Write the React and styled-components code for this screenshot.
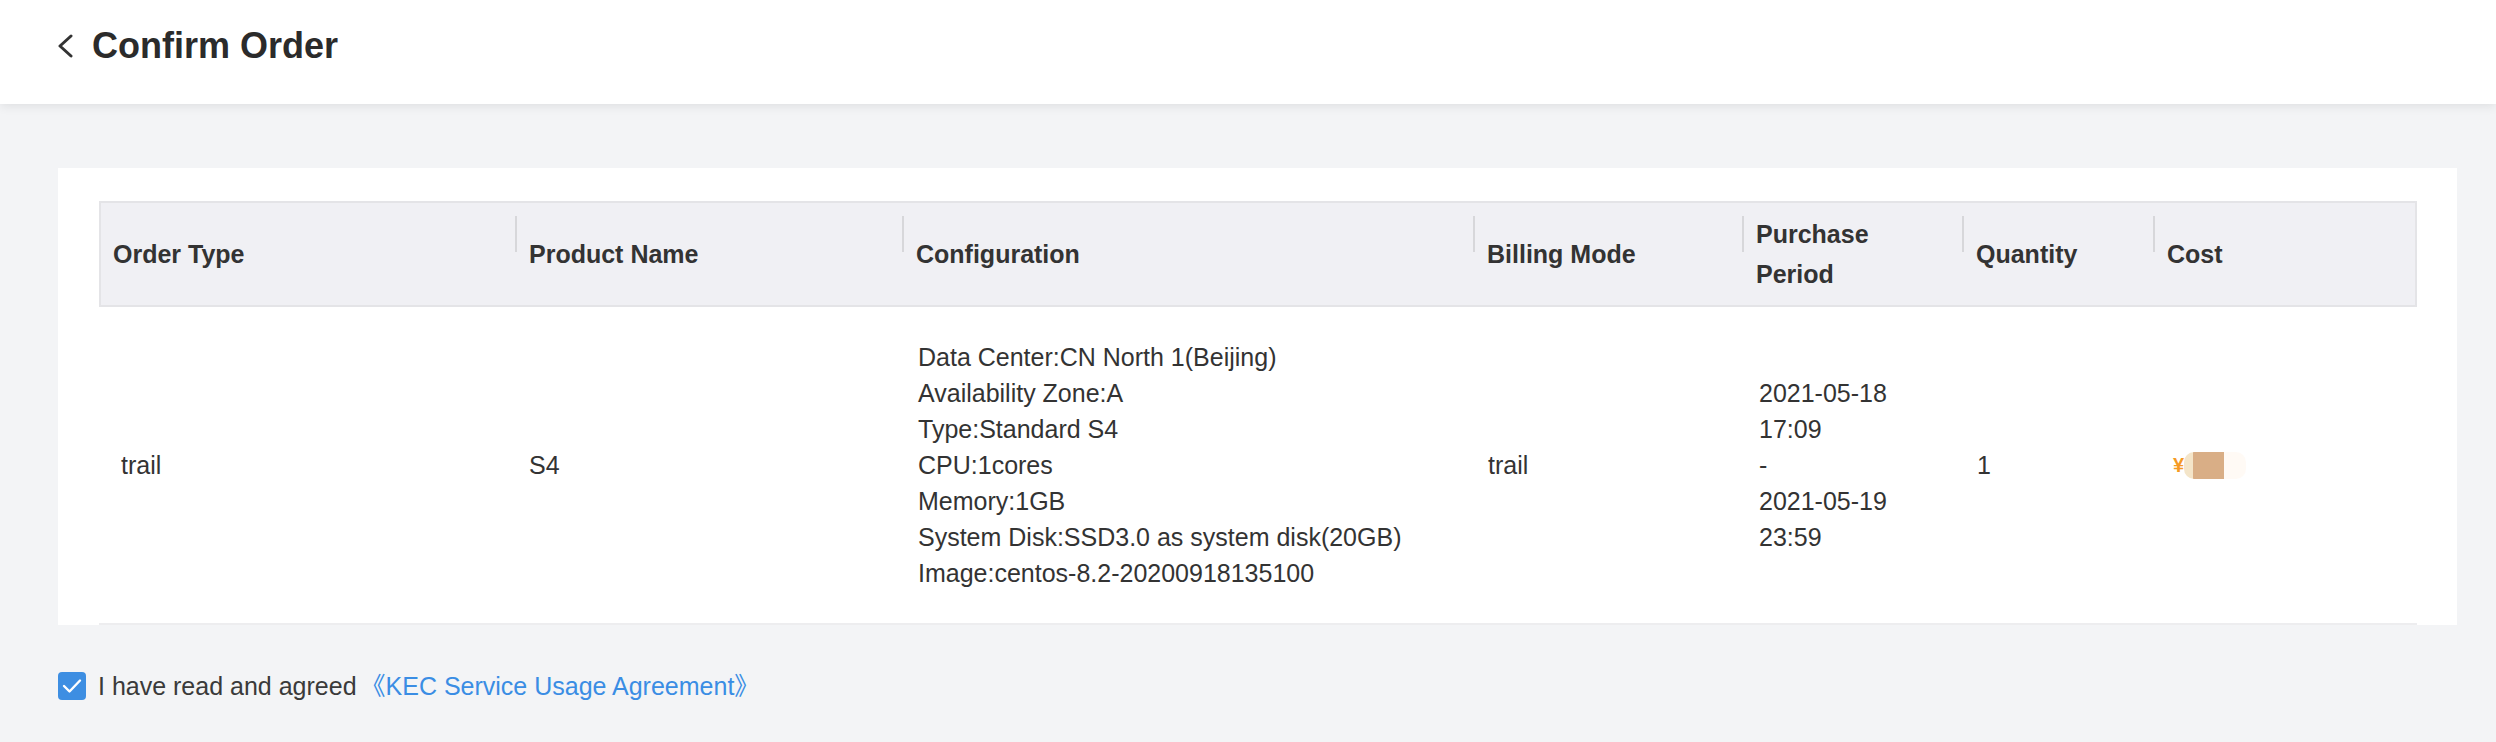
import React from "react";
import styled, { createGlobalStyle } from "styled-components";

const GlobalStyle = createGlobalStyle`
  html, body {
    margin: 0;
    padding: 0;
    background: #f3f4f6;
    font-family: "Liberation Sans", "Noto Sans CJK SC", Arial, sans-serif;
    color: #333;
  }
  * { box-sizing: border-box; }
`;

const COLS = "416px 387px 571px 269px 220px 191px 1fr";

const Page = styled.div`
  min-height: 742px;
  background: #f3f4f6;
`;

const TopBar = styled.header`
  height: 104px;
  background: #fff;
  box-shadow: 0 2px 10px rgba(0, 0, 0, 0.09);
  padding: 24px 0 0 56px;
  position: relative;
  z-index: 1;
`;

const TitleRow = styled.div`
  display: flex;
  align-items: center;
  height: 44px;
`;

const Back = styled.svg`
  width: 18px;
  height: 24px;
  margin-right: 18px;
  flex-shrink: 0;
`;

const Title = styled.h1`
  margin: 0;
  font-size: 36px;
  line-height: 44px;
  font-weight: 700;
  color: #2b2b2b;
`;

const Main = styled.main`
  padding: 64px 39px 0 58px;
`;

const Card = styled.section`
  background: #fff;
  padding: 33px 40px 0 41px;
`;

const HeadRow = styled.div`
  display: grid;
  grid-template-columns: ${COLS};
  height: 106px;
  background: #f0f0f4;
  box-shadow: inset 0 0 0 2px #e4e4e7;
`;

const HeadCell = styled.div`
  position: relative;
  display: flex;
  align-items: center;
  padding-left: 14px;
  font-size: 25px;
  line-height: 40px;
  font-weight: 700;
  color: #333;

  ${(p) =>
    p.$divider &&
    `
    &::before {
      content: "";
      position: absolute;
      left: 0;
      top: 15px;
      width: 2px;
      height: 36px;
      background: #d7d7da;
    }
  `}
`;

const BodyRow = styled.div`
  display: grid;
  grid-template-columns: ${COLS};
  padding: 32px 0;
  border-bottom: 2px solid #ededef;
`;

const Cell = styled.div`
  display: flex;
  flex-direction: column;
  justify-content: center;
  padding-left: ${(p) => p.$pad || 15}px;
  font-size: 25px;
  line-height: 36px;
  color: #333;
`;

const Line = styled.div`
  white-space: nowrap;
`;

const Cost = styled.div`
  display: flex;
  align-items: center;
`;

const Yen = styled.span`
  color: #f59a23;
  font-size: 20px;
  font-weight: 700;
  line-height: 20px;
`;

const Masked = styled.span`
  display: inline-block;
  width: 62px;
  height: 27px;
  border-radius: 10px;
  background: linear-gradient(
    to right,
    #f4e5c9 0 9px,
    #d9ae86 9px 40px,
    #fffaf5 40px
  );
`;

const Agreement = styled.div`
  display: flex;
  align-items: center;
  padding-top: 47px;
  font-size: 25px;
  line-height: 28px;
  color: #3a3a3a;
`;

const Check = styled.span`
  width: 28px;
  height: 28px;
  border-radius: 4px;
  background: #3d8ee2;
  display: flex;
  align-items: center;
  justify-content: center;
  margin-right: 12px;
  flex-shrink: 0;
`;

const Link = styled.a`
  color: #3a8de4;
  text-decoration: none;
  margin-left: 4px;
`;

const headers = [
  ["Order Type"],
  ["Product Name"],
  ["Configuration"],
  ["Billing Mode"],
  ["Purchase", "Period"],
  ["Quantity"],
  ["Cost"],
];

const config = [
  "Data Center:CN North 1(Beijing)",
  "Availability Zone:A",
  "Type:Standard S4",
  "CPU:1cores",
  "Memory:1GB",
  "System Disk:SSD3.0 as system disk(20GB)",
  "Image:centos-8.2-20200918135100",
];

const period = ["2021-05-18", "17:09", "-", "2021-05-19", "23:59"];

export default function App() {
  return (
    <Page>
      <GlobalStyle />
      <TopBar>
        <TitleRow>
          <Back viewBox="0 0 18 24">
            <polyline
              points="15,2 4,12 15,22"
              fill="none"
              stroke="#333"
              strokeWidth="3"
              strokeLinecap="round"
              strokeLinejoin="round"
            />
          </Back>
          <Title>Confirm Order</Title>
        </TitleRow>
      </TopBar>

      <Main>
        <Card>
          <HeadRow>
            {headers.map((h, i) => (
              <HeadCell key={i} $divider={i > 0}>
                <div>
                  {h.map((t) => (
                    <Line key={t}>{t}</Line>
                  ))}
                </div>
              </HeadCell>
            ))}
          </HeadRow>
          <BodyRow>
            <Cell $pad={22}>trail</Cell>
            <Cell $pad={14}>S4</Cell>
            <Cell $pad={16}>
              {config.map((c) => (
                <Line key={c}>{c}</Line>
              ))}
            </Cell>
            <Cell>trail</Cell>
            <Cell $pad={17}>
              {period.map((p, i) => (
                <Line key={i}>{p}</Line>
              ))}
            </Cell>
            <Cell>1</Cell>
            <Cell $pad={20}>
              <Cost>
                <Yen>¥</Yen>
                <Masked />
              </Cost>
            </Cell>
          </BodyRow>
        </Card>

        <Agreement>
          <Check>
            <svg width="20" height="16" viewBox="0 0 20 16">
              <polyline
                points="2,8 7.5,13.5 18,2.5"
                fill="none"
                stroke="#fff"
                strokeWidth="2.4"
                strokeLinecap="round"
                strokeLinejoin="round"
              />
            </svg>
          </Check>
          <span>I have read and agreed</span>
          <Link href="#">《KEC Service Usage Agreement》</Link>
        </Agreement>
      </Main>
    </Page>
  );
}
